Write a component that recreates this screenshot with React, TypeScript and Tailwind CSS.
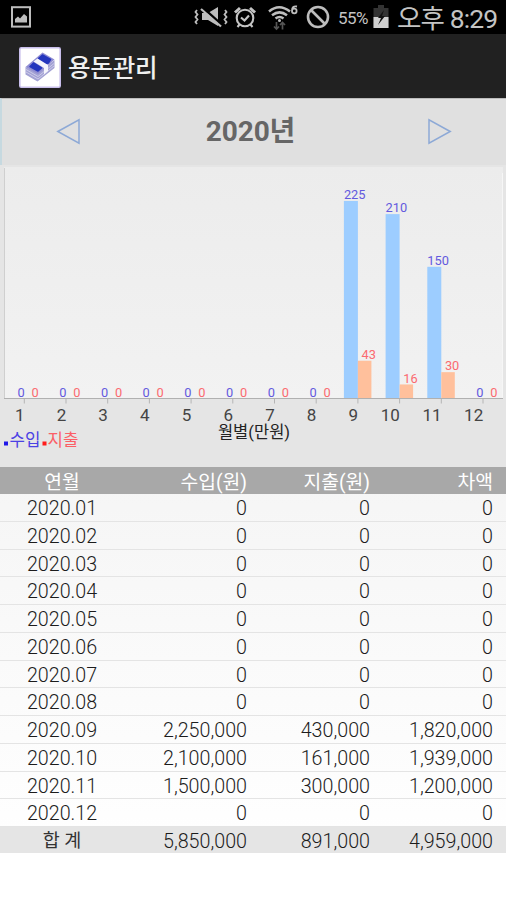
import React from 'react';

// ==========================================
// --- DATA ---
// ==========================================
const YEAR = 2020;

const records = [
    { month: 1, income: 0, expense: 0 },
    { month: 2, income: 0, expense: 0 },
    { month: 3, income: 0, expense: 0 },
    { month: 4, income: 0, expense: 0 },
    { month: 5, income: 0, expense: 0 },
    { month: 6, income: 0, expense: 0 },
    { month: 7, income: 0, expense: 0 },
    { month: 8, income: 0, expense: 0 },
    { month: 9, income: 2250000, expense: 430000 },
    { month: 10, income: 2100000, expense: 161000 },
    { month: 11, income: 1500000, expense: 300000 },
    { month: 12, income: 0, expense: 0 },
];

const won = (n: number) => n.toLocaleString('en-US');

// ==========================================
// --- STATUS BAR ---
// ==========================================
function StatusBar() {
    return (
        <div className="flex h-[34px] items-center bg-black text-[#c4c4c4]">
            <svg className="ml-[11px] h-[22px] w-5" viewBox="0 0 20 22">
                <rect x="1" y="1.2" width="18" height="19.4" fill="none" stroke="#bdbdbd" strokeWidth="2" />
                <path d="M4 16.5V13l3-2.5 2 2 4-4.5 3 2.500V16.500z" fill="#bdbdbd" />
            </svg>

            {/* Sound off / vibrate */}
            <svg className="ml-[163px] h-[22px] w-[34px]" viewBox="0 0 34 22" fill="none" stroke="#bdbdbd">
                <path d="M3 4l-1.500 2 2 2.500-2 2.500 2 2.500-2 2.500 1.500 2M31 4l1.500 2-2 2.500 2 2.500-2 2.500 2 2.500-1.500 2" strokeWidth="1.800" />
                <path d="M8 7h6l10-6v19l-10-6H8z" fill="#bdbdbd" stroke="none" />
                <path d="M8.500 1.500L28 19" stroke="#000" strokeWidth="2.500" />
                <path d="M7 3L27 20.500" strokeWidth="2.200" />
            </svg>

            {/* Alarm */}
            <svg className="ml-[5px] h-6 w-6" viewBox="0 0 24 24" fill="none" stroke="#c4c4c4" strokeWidth="2.100">
                <circle cx="12" cy="13" r="8.300" />
                <path d="M2 7.500l5-4.500M22 7.500L17 3" strokeWidth="3" />
                <path d="M8 12.500l3.500 3 4.500-5" />
                <path d="M6.500 19.500L4.500 22M17.500 19.500l2 2.500" />
            </svg>

            {/* Wifi with data arrows */}
            <svg className="ml-[10px] h-[27px] w-[34px]" viewBox="0 0 34 27" fill="none" stroke="#bdbdbd">
                <path d="M2 7.500Q12-1 23 7.500M5 11.200Q12.500 5.500 20 11.200M8.500 14.500Q12.500 11.500 16.500 14.500" strokeWidth="2.500" />
                <circle cx="12.500" cy="16.500" r="1.500" fill="#bdbdbd" stroke="none" />
                <path d="M9.500 18v7M7 22.500l2.500 2.500 2.500-2.500M15.500 25.500v-7M13 21l2.500-2.500L18 21" stroke="#555" strokeWidth="1.700" />
                <path d="M30 2.500Q25 1.500 25 6.500M25 7a2.300 2.300 0 1 0 4.600 0a2.300 2.300 0 1 0-4.600 0" strokeWidth="1.800" />
            </svg>

            {/* Blocked */}
            <svg className="ml-[5px] h-6 w-6" viewBox="0 0 24 24" fill="none" stroke="#bdbdbd" strokeWidth="2.600">
                <circle cx="12" cy="12" r="10" />
                <path d="M5 5l14 14" />
            </svg>

            <span className="ml-[8px] w-[32px] pt-[3px] text-[17px] tracking-[-0.600px]">55%</span>
            <svg className="ml-[3px] h-6 w-4" viewBox="0 0 16 24">
                <path d="M5 0h6v3h4.500v20H.5V3H5z" fill="#333" />
                <path d="M.5 12h15v11H.5z" fill="#d0d0d0" />
                <path d="M11 5l-6 8h3l-3 7 7-9H9z" fill="#111" />
            </svg>
            <span className="ml-[8px] pt-[5px] text-[26.500px] leading-none tracking-[-0.900px] whitespace-nowrap">오후 8:29</span>
        </div>
    );
}

// ==========================================
// --- TITLE BAR ---
// ==========================================
function TitleBar() {
    return (
        <div className="flex h-16 items-center bg-[#212121] pt-0.5 pl-[19px]">
            <svg className="h-[41px] w-[42px]" viewBox="0 0 42 41">
                <rect x=".8" y=".8" width="40.400" height="39.400" rx="1.500" fill="#fff" stroke="#c9bfec" strokeWidth="1.600" />
                <path d="M6.500 20v7.500L18.500 34.500 35.500 21v-8L19 26z" fill="#a3a2d4" />
                <path d="M6.500 20L23.500 5.500 35.500 12.500 19 27z" fill="#8f8cd2" />
                <path d="M7 22.500l12 7 16-13M7 25l12 7 16-13" stroke="#d5d4ee" strokeWidth=".8" fill="none" />
                <path d="M19.500 11.500l4-3.500 8 4.500-2 3.500-3 .5z" fill="#2436bd" stroke="#2436bd" strokeWidth="1.500" strokeLinejoin="round" />
                <path d="M11 19.500l3.500-3.500 8 5-3.500 3z" fill="#2436bd" stroke="#2436bd" strokeWidth="1.500" strokeLinejoin="round" />
                <path d="M14.500 14.500l4-3 10.500 6.500v6l-4 3.500v-6.500z" fill="#f4f4fb" />
            </svg>
            <h1 className="ml-[7px] pt-1 text-[24.500px] leading-none font-medium tracking-[-0.200px] text-[#f0f0f0]">용돈관리</h1>
        </div>
    );
}

// ==========================================
// --- YEAR SELECTOR ---
// ==========================================
function YearNav() {
    return (
        <div className="flex h-[67px] items-center justify-between border-t border-l-2 border-t-[#bdbdbd] border-l-[#c6d9e0] bg-[#e0e0e0] pr-[54px] pl-[54px]">
            <button aria-label="이전">
                <svg className="h-7 w-6" viewBox="0 0 24 28">
                    <path d="M1.800 13.500L23 1.800v23.400z" fill="none" stroke="#8da9d6" strokeWidth="1.500" />
                </svg>
            </button>
            <span className="pr-[7px] text-[28px] leading-none font-bold tracking-[-0.100px] text-[#666]">{YEAR}년</span>
            <button aria-label="다음">
                <svg className="h-7 w-6" viewBox="0 0 24 28">
                    <path d="M22.200 13.500L1 1.800v23.400z" fill="none" stroke="#8da9d6" strokeWidth="1.500" />
                </svg>
            </button>
        </div>
    );
}

// ==========================================
// --- MONTHLY CHART (unit: 10,000 won) ---
// ==========================================
function MonthlyChart() {
    const base = 233.5;
    const scale = 0.878;

    return (
        <svg className="block h-[302px] w-full" viewBox="0 0 506 302">
            <defs>
                <linearGradient id="plot" x1="0" y1="0" x2="0" y2="1">
                    <stop offset="0" stopColor="#ececec" />
                    <stop offset="1" stopColor="#f2f2f2" />
                </linearGradient>
            </defs>
            <rect width="506" height="302" fill="#e5e5e5" />
            <rect x="4" y="2" width="499" height="231.500" fill="url(#plot)" />
            <path d="M4.500 3v230.500" stroke="#cfcfcf" />
            <path d="M502.500 8v225" stroke="#f6f6f6" />

            {records.map((r, i) => {
                const x = 24.3 + i * 41.7;
                const income = Math.round(r.income / 10000);
                const expense = Math.round(r.expense / 10000);
                return (
                    <g key={r.month}>
                        <rect x={x - 14} y={base - income * scale} width="14" height={income * scale} fill="#9dcdff" />
                        <rect x={x} y={base - expense * scale} width="13.500" height={expense * scale} fill="#ffc09c" />
                        <text x={x - 3.2} y={base - income * scale - 1.7} textAnchor="middle" fontSize="12.800" fill="#6359de">{income}</text>
                        <text x={x + 10.8} y={base - expense * scale - 1.7} textAnchor="middle" fontSize="12.800" fill="#fb6a70">{expense}</text>
                        <path d={`M${x} ${base}v5`} stroke="#b5b5b5" />
                        <text x={x + 0.2} y="256" textAnchor="end" fontSize="17" fill="#444">{r.month}</text>
                    </g>
                );
            })}
            <path d="M4 233.500h499" stroke="#b0b0b0" />

            <text x="254" y="273" textAnchor="middle" fontSize="16.500" fill="#222">월별(만원)</text>

            {/* Legend */}
            <rect x="4" y="276.500" width="4" height="4" fill="#2018e8" />
            <text x="9.500" y="280.800" fontSize="16.800" fill="#4b41e4">수입</text>
            <rect x="42.500" y="276.500" width="4" height="4" fill="#ff1c1c" />
            <text x="47.500" y="280.800" fontSize="16.800" fill="#fb5f66">지출</text>
        </svg>
    );
}

// ==========================================
// --- MONTHLY TABLE ---
// ==========================================
function MonthlyTable() {
    const totalIncome = records.reduce((sum, r) => sum + r.income, 0);
    const totalExpense = records.reduce((sum, r) => sum + r.expense, 0);

    return (
        <div className="bg-linear-to-b from-[#f5f5f5] to-white text-[19.700px] text-[#1c1c1c]">
            <div className="grid h-[27px] grid-cols-[124px_123px_123px_123px] items-center bg-[#a8a8a8] pt-[4px] text-right text-[19.300px] leading-none text-white">
                <span className="text-center">연월</span>
                <span>수입(원)</span>
                <span>지출(원)</span>
                <span>차액</span>
            </div>
            {records.map((r) => (
                <div
                    key={r.month}
                    className="grid h-[27.750px] grid-cols-[124px_123px_123px_123px] items-center border-b border-[#e4e4e4] pt-[3px] text-right leading-none font-light"
                >
                    <span className="text-center">{YEAR}.{String(r.month).padStart(2, '0')}</span>
                    <span>{won(r.income)}</span>
                    <span>{won(r.expense)}</span>
                    <span>{won(r.income - r.expense)}</span>
                </div>
            ))}
            <div className="grid h-[26px] grid-cols-[124px_123px_123px_123px] items-center bg-[#e5e5e5] pt-[3px] text-right leading-none font-light">
                <span className="text-center text-[18.500px] font-normal text-[#333]">합 계</span>
                <span>{won(totalIncome)}</span>
                <span>{won(totalExpense)}</span>
                <span>{won(totalIncome - totalExpense)}</span>
            </div>
        </div>
    );
}

export default function App() {
    return (
        <div className="h-[900px] w-[506px] overflow-hidden bg-white font-[Roboto,'Noto_Sans_CJK_KR',sans-serif]">
            <StatusBar />
            <TitleBar />
            <YearNav />
            <MonthlyChart />
            <MonthlyTable />
        </div>
    );
}
